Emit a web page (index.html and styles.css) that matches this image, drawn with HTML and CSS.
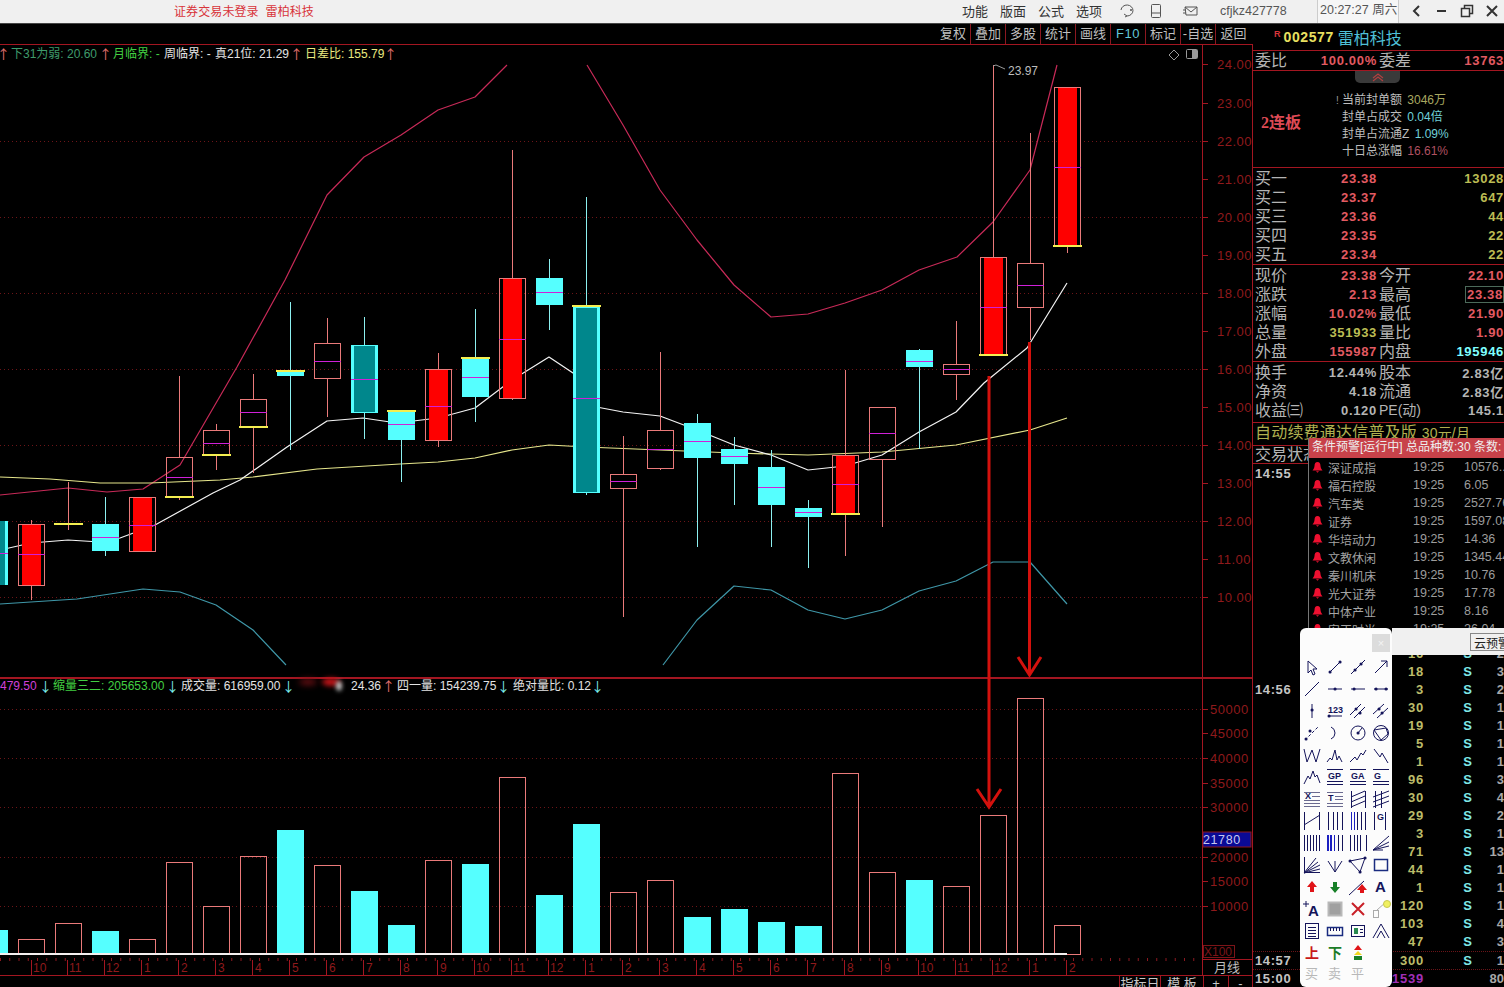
FILE: index.html
```html
<!DOCTYPE html>
<html lang="zh-CN">
<head>
<meta charset="utf-8">
<title>雷柏科技</title>
<link rel="stylesheet" href="styles.css">
</head>
<body>
<svg class="defs" width="0" height="0"><symbol id="bell" viewBox="0 0 11 12"><path d="M5.500 1C3.500 1 2.600 2.600 2.500 5 2.400 7 1.500 8 .5 9.500h10C9.500 8 8.600 7 8.500 5 8.400 2.600 7.500 1 5.500 1z"/><path d="M4 10.300h3l-1.500 1.500z"/></symbol></svg>
<header class="titlebar">
  <div class="title-name">证券交易未登录&nbsp;&nbsp;雷柏科技</div>
  <nav class="menu"><span>功能</span><span>版面</span><span>公式</span><span>选项</span></nav>
  <div class="tb-icons">
    <svg width="18" height="18" viewBox="0 0 18 18"><path class="tbi" d="M3 8a6 5.500 0 1 1 6 6l-2 1M6 12l3 2"/><circle cx="13" cy="8" r="1" class="tbd"/></svg>
    <svg width="14" height="18" viewBox="0 0 14 18"><rect class="tbi" x="2.500" y="2.500" width="9" height="13" rx="1"/><path class="tbi" d="M3 11h8"/></svg>
    <svg class="tb-mail" width="18" height="18" viewBox="0 0 18 18"><path class="tbi" d="M3 5h12v8H4zM3 5l6 5 6-5M1 8h3M1 11h3"/></svg>
  </div>
  <div class="user">cfjkz427778</div>
  <div class="clock">20:27:27 周六</div>
  <div class="win-ctl">
    <svg width="14" height="14" viewBox="0 0 14 14"><path class="wc" d="M9 2L4 7l5 5"/></svg>
    <svg width="14" height="14" viewBox="0 0 14 14"><path class="wc" d="M2 7h9"/></svg>
    <svg width="14" height="14" viewBox="0 0 14 14"><path class="wc thin" d="M1.500 4.500h8v8h-8zM4.500 4V1.500h8v8H10"/></svg>
    <svg width="14" height="14" viewBox="0 0 14 14"><path class="wc" d="M2 2l10 10M12 2L2 12"/></svg>
  </div>
</header>

<main class="main">
  <section class="chart-col">
    <div class="tabs">
      <span>复权</span><span>叠加</span><span>多股</span><span>统计</span><span>画线</span><span class="f10">F10</span><span>标记</span><span>-自选</span><span>返回</span>
    </div>
    <svg class="chart" width="1253" height="932" viewBox="0 44 1253 932">
      <path class="frame" d="M0 44.500H1253M1202.500 44V976M0 677.500H1253M0 678.500H1253M1202 959.500H1253M0 975.500H1253M1252.500 44V976"/>
      <path class="frame" d="M31.500 960V975M67.500 960V975M104.500 960V975M141.500 960V975M178.500 960V975M215.500 960V975M252.500 960V975M289.500 960V975M326.500 960V975M363.500 960V975M400.500 960V975M437.500 960V975M474.500 960V975M511.500 960V975M548.500 960V975M585.500 960V975M622.500 960V975M659.500 960V975M696.500 960V975M733.500 960V975M770.500 960V975M807.500 960V975M844.500 960V975M881.500 960V975M918.500 960V975M955.500 960V975M992.500 960V975M1029.500 960V975M1066.500 960V975"/>
      <path class="x-tick" d="M0 959.500H1202"/>
      <path class="grid" d="M0 141.500H1202M0 217.500H1202M0 293.500H1202M0 369.500H1202M0 445.500H1202M0 521.500H1202M0 597.500H1202M0 709.500H1202M0 758.500H1202M0 807.500H1202M0 857.500H1202M0 906.500H1202"/>
      <path class="frame" d="M1203 64.500h5M1203 103.500h5M1203 141.500h5M1203 179.500h5M1203 217.500h5M1203 255.500h5M1203 293.500h5M1203 331.500h5M1203 369.500h5M1203 407.500h5M1203 445.500h5M1203 483.500h5M1203 521.500h5M1203 559.500h5M1203 597.500h5M1203 709.500h5M1203 733.500h5M1203 758.500h5M1203 783.500h5M1203 807.500h5M1203 857.500h5M1203 881.500h5M1203 906.500h5"/>

      <polyline class="ln-pink" points="0,495 68,488 107,492 143,489 180,465 237,367 285,280 327,195 364,157 401,135 438,110 475,97 507,65"/>
      <polyline class="ln-pink" points="587,65 623,125 660,190 697,240 734,285 771,317 808,314 845,303 882,290 919,270 957,257 993,222 1030,170 1057,65"/>
      <polyline class="ln-yel" points="0,477 50,479 100,483 150,483 220,480 253,477 317,469 400,464 438,462 475,458 512,450 549,445 586,447 660,450 734,453 808,455 882,452 956,445 1030,430 1067,418"/>
      <polyline class="ln-wht" points="0,550 31,543 68,540 100,542 120,538 155,525 213,493 240,480 287,447 327,421 363,418 397,423 438,418 475,408 512,380 549,357 576,375 586,405 623,412 660,416 697,430 734,445 771,455 808,470 845,466 882,455 919,432 956,412 984,383 1027,348 1067,283"/>
      <polyline class="ln-teal" points="0,604 77,599 143,589 180,592 216,605 253,630 286,665"/>
      <polyline class="ln-teal" points="663,665 697,620 734,586 771,590 808,610 845,619 882,610 919,591 956,581 993,562 1030,562 1067,604"/>

      <path class="wk-up" d="M31.500 520V524M31.500 585V600M68.500 482V530M179.500 376V457M179.500 496V500M216.500 424V430M216.500 454V470M253.500 374V399M253.500 426V473M327.500 318V343M327.500 378V417M438.500 353V369M438.500 440V447M512.500 150V278M512.500 398V400M623.500 436V474M623.500 488V617M660.500 352V430M660.500 468V470M845.500 370V455M845.500 513V556M882.500 459V527M956.500 321V364M956.500 374V400M993.500 65V257M1030.500 133V263M1030.500 307V340M1067.500 245V253"/>
      <path class="wk-dn" d="M105.500 497V556M290.500 302V450M364.500 317V439M401.500 410V482M475.500 309V422M549.500 259V330M586.500 197V495M697.500 414V547M734.500 437V505M771.500 450V547M808.500 500V568M919.500 349V449"/>

      <g class="c-box">
        <rect x="18.500" y="524.500" width="26" height="61"/><rect x="129.500" y="497.500" width="26" height="54"/><rect x="166.500" y="457.500" width="26" height="39"/><rect x="203.500" y="430.500" width="26" height="24"/><rect x="240.500" y="399.500" width="26" height="27"/><rect x="314.500" y="343.500" width="26" height="35"/><rect x="425.500" y="369.500" width="26" height="71"/><rect x="499.500" y="278.500" width="26" height="120"/><rect x="610.500" y="474.500" width="26" height="14"/><rect x="647.500" y="430.500" width="26" height="38"/><rect x="832.500" y="455.500" width="26" height="58"/><rect x="869.500" y="407.500" width="26" height="52"/><rect x="943.500" y="364.500" width="26" height="10"/><rect x="980.500" y="257.500" width="26" height="97"/><rect x="1017.500" y="263.500" width="26" height="44"/><rect x="1054.500" y="87.500" width="26" height="158"/>
      </g>
      <g class="c-red">
        <rect x="22" y="525" width="19" height="60"/><rect x="133" y="498" width="19" height="53"/><rect x="429" y="370" width="19" height="70"/><rect x="503" y="279" width="19" height="119"/><rect x="836" y="456" width="19" height="57"/><rect x="984" y="258" width="19" height="96"/><rect x="1058" y="88" width="19" height="157"/>
      </g>
      <g class="c-cy">
        <rect x="0" y="521" width="8" height="64"/><rect x="92" y="524" width="27" height="27"/><rect x="277" y="371" width="27" height="5"/><rect x="351" y="345" width="27" height="68"/><rect x="388" y="411" width="27" height="29"/><rect x="462" y="358" width="27" height="39"/><rect x="536" y="278" width="27" height="27"/><rect x="573" y="307" width="27" height="186"/><rect x="684" y="423" width="27" height="35"/><rect x="721" y="449" width="27" height="15"/><rect x="758" y="467" width="27" height="38"/><rect x="795" y="508" width="27" height="9"/><rect x="906" y="350" width="27" height="17"/>
      </g>
      <g class="c-teal">
        <rect x="0" y="521" width="5" height="64"/><rect x="354" y="346" width="21" height="66"/><rect x="576" y="308" width="21" height="184"/>
      </g>
      <path class="mid" d="M0 553.500h8M18 554.500h27M92 537.500h27M129 525.500h27M166 477.500h27M203 443.500h27M240 412.500h27M314 361.500h27M351 379.500h27M388 424.500h27M425 406.500h27M462 377.500h27M499 339.500h27M536 292.500h27M573 398.500h27M610 481.500h27M647 449.500h27M684 441.500h27M721 456.500h27M758 487.500h27M795 512.500h27M832 484.500h27M869 433.500h27M906 361.500h27M943 369.500h27M980 307.500h27M1017 285.500h27M1054 167.500h27"/>
      <path class="c-yel" d="M54 523.500h29M165 496.500h29M202 454.500h29M239 426.500h29M276 370.500h29M387 410.500h29M461 357.500h29M572 306h29M831 513.500h29M979 354.500h29M1053 245.500h29"/>

      <path class="c-note" d="M993 66l3-1 9 4"/>
      <text class="t-gray" x="1008" y="75">23.97</text>
      <path class="c-note" d="M1174 50l5 5-5 5-5-5z"/>
      <rect class="c-note" x="1186.500" y="49.500" width="11" height="9" rx="1"/><rect class="c-fillg" x="1192" y="50" width="5" height="8"/>

      <g class="legend">
        <text class="t-red ar" x="-3" y="59">↑</text>
        <text class="t-dgreen" x="11" y="58">下31为弱: 20.60</text><text class="t-red ar" x="99" y="59">↑</text>
        <text class="t-green" x="113" y="58">月临界: -</text>
        <text class="t-white" x="164" y="58">周临界: -</text>
        <text class="t-white" x="215" y="58">真21位: 21.29</text><text class="t-red ar" x="290" y="59">↑</text>
        <text class="t-yel" x="305" y="58">日差比: 155.79</text><text class="t-red ar" x="384" y="59">↑</text>

        <text class="t-mag" x="0" y="690">479.50</text><text class="t-cy ar" x="39" y="691">↓</text>
        <text class="t-green" x="53" y="690">缩量三二: 205653.00</text><text class="t-cy ar" x="166" y="691">↓</text>
        <text class="t-white" x="181" y="690">成交量: 616959.00</text><text class="t-cy ar" x="282" y="691">↓</text>
        <ellipse class="blob-d" cx="308" cy="682" rx="9" ry="3"/><ellipse class="blob-r" cx="331" cy="682" rx="9" ry="4"/><ellipse class="blob-w" cx="339" cy="686" rx="3" ry="5"/>
        <text class="t-white" x="351" y="690">24.36</text><text class="t-red ar" x="382" y="691">↑</text>
        <text class="t-white" x="397" y="690">四一量: 154239.75</text><text class="t-cy ar" x="497" y="691">↓</text>
        <text class="t-white" x="513" y="690">绝对量比: 0.12</text><text class="t-cy ar" x="591" y="691">↓</text>
      </g>

      <g class="axis">
        <text x="1217" y="69">24.00</text><text x="1217" y="108">23.00</text><text x="1217" y="146">22.00</text><text x="1217" y="184">21.00</text><text x="1217" y="222">20.00</text><text x="1217" y="260">19.00</text><text x="1217" y="298">18.00</text><text x="1217" y="336">17.00</text><text x="1217" y="374">16.00</text><text x="1217" y="412">15.00</text><text x="1217" y="450">14.00</text><text x="1217" y="488">13.00</text><text x="1217" y="526">12.00</text><text x="1217" y="564">11.00</text><text x="1217" y="602">10.00</text>
        <text x="1210" y="714">50000</text><text x="1210" y="738">45000</text><text x="1210" y="763">40000</text><text x="1210" y="788">35000</text><text x="1210" y="812">30000</text><text x="1210" y="862">20000</text><text x="1210" y="886">15000</text><text x="1210" y="911">10000</text>
      </g>
      <rect class="hl" x="1203" y="832" width="48" height="15"/>
      <text class="t-hl" x="1203" y="844">21780</text>
      <rect class="xbox" x="1203.500" y="945.500" width="31" height="12"/>
      <text class="t-xbox" x="1204" y="956">X100</text>

      <g class="v-box">
        <rect x="18.500" y="939.500" width="26" height="15"/><rect x="55.500" y="923.500" width="26" height="31"/><rect x="129.500" y="939.500" width="26" height="15"/><rect x="166.500" y="862.500" width="26" height="92"/><rect x="203.500" y="906.500" width="26" height="48"/><rect x="240.500" y="856.500" width="26" height="98"/><rect x="314.500" y="865.500" width="26" height="89"/><rect x="425.500" y="860.500" width="26" height="94"/><rect x="499.500" y="777.500" width="26" height="177"/><rect x="610.500" y="892.500" width="26" height="62"/><rect x="647.500" y="880.500" width="26" height="74"/><rect x="832.500" y="773.500" width="26" height="181"/><rect x="869.500" y="872.500" width="26" height="82"/><rect x="943.500" y="886.500" width="26" height="68"/><rect x="980.500" y="815.500" width="26" height="139"/><rect x="1017.500" y="698.500" width="26" height="256"/><rect x="1054.500" y="925.500" width="26" height="29"/>
      </g>
      <g class="c-cy">
        <rect x="0" y="930" width="8" height="24"/><rect x="92" y="931" width="27" height="23"/><rect x="277" y="830" width="27" height="124"/><rect x="351" y="891" width="27" height="63"/><rect x="388" y="925" width="27" height="29"/><rect x="462" y="864" width="27" height="90"/><rect x="536" y="895" width="27" height="59"/><rect x="573" y="824" width="27" height="130"/><rect x="684" y="917" width="27" height="37"/><rect x="721" y="909" width="27" height="45"/><rect x="758" y="922" width="27" height="32"/><rect x="795" y="926" width="27" height="28"/><rect x="906" y="880" width="27" height="74"/>
      </g>
      <path class="baseline" d="M0 954H1067"/>

      <g class="x-lbl">
        <text x="33" y="972">10</text><text x="69" y="972">11</text><text x="106" y="972">12</text><text x="144" y="972">1</text><text x="181" y="972">2</text><text x="218" y="972">3</text><text x="255" y="972">4</text><text x="292" y="972">5</text><text x="329" y="972">6</text><text x="366" y="972">7</text><text x="403" y="972">8</text><text x="440" y="972">9</text><text x="476" y="972">10</text><text x="513" y="972">11</text><text x="550" y="972">12</text><text x="588" y="972">1</text><text x="625" y="972">2</text><text x="662" y="972">3</text><text x="699" y="972">4</text><text x="736" y="972">5</text><text x="773" y="972">6</text><text x="810" y="972">7</text><text x="847" y="972">8</text><text x="884" y="972">9</text><text x="920" y="972">10</text><text x="957" y="972">11</text><text x="994" y="972">12</text><text x="1032" y="972">1</text><text x="1069" y="972">2</text>
      </g>
      <text class="t-month" x="1214" y="972">月线</text>

      <path class="arrow" d="M989 376V806M977 789l12 18 12-18"/>
      <path class="arrow" d="M1029.500 342V675M1018 657l11.500 18 11.500-18"/>
    </svg>
    <div class="bottom-tabs"><span class="bt1">指标日</span><span class="bt2">模 板</span><span class="sq">+</span><span class="sq">-</span></div>
  </section>

  <aside class="side">
    <div class="s-head"><sup class="r">R</sup><b class="code">002577</b><span class="sname">雷柏科技</span></div>
    <div class="s-row wb"><span class="l">委比</span><span class="v red">100.00%</span><span class="l">委差</span><span class="v red">13763</span></div>
    <div class="s-seal">
      <div class="fold">
        <svg width="14" height="9" viewBox="0 0 14 9"><path class="foldp" d="M2 5l5-4 5 4M2 8l5-4 5 4"/></svg>
      </div>
      <div class="board">2连板</div>
      <ul class="seal-list">
        <li><i class="bang">!</i>当前封单额 <em class="olive">3046万</em></li>
        <li>封单占成交 <em class="sky">0.04倍</em></li>
        <li>封单占流通Z <em class="sky">1.09%</em></li>
        <li>十日总涨幅 <em class="rose">16.61%</em></li>
      </ul>
    </div>
    <div class="s-block">
      <div class="s-row"><span class="l">买一</span><span class="v red">23.38</span><span></span><span class="v yel">13028</span></div>
      <div class="s-row"><span class="l">买二</span><span class="v red">23.37</span><span></span><span class="v yel">647</span></div>
      <div class="s-row"><span class="l">买三</span><span class="v red">23.36</span><span></span><span class="v yel">44</span></div>
      <div class="s-row"><span class="l">买四</span><span class="v red">23.35</span><span></span><span class="v yel">22</span></div>
      <div class="s-row"><span class="l">买五</span><span class="v red">23.34</span><span></span><span class="v yel">22</span></div>
    </div>
    <div class="s-block">
      <div class="s-row"><span class="l">现价</span><span class="v red">23.38</span><span class="l">今开</span><span class="v red">22.10</span></div>
      <div class="s-row"><span class="l">涨跌</span><span class="v red">2.13</span><span class="l">最高</span><span class="v red"><span class="boxed">23.38</span></span></div>
      <div class="s-row"><span class="l">涨幅</span><span class="v red">10.02%</span><span class="l">最低</span><span class="v red">21.90</span></div>
      <div class="s-row"><span class="l">总量</span><span class="v yel">351933</span><span class="l">量比</span><span class="v red">1.90</span></div>
      <div class="s-row"><span class="l">外盘</span><span class="v red">155987</span><span class="l">内盘</span><span class="v cy">195946</span></div>
    </div>
    <div class="s-block three">
      <div class="s-row"><span class="l">换手</span><span class="v gr">12.44%</span><span class="l">股本</span><span class="v gr">2.83亿</span></div>
      <div class="s-row"><span class="l">净资</span><span class="v gr">4.18</span><span class="l">流通</span><span class="v gr">2.83亿</span></div>
      <div class="s-row"><span class="l">收益㈢</span><span class="v gr">0.120</span><span class="l pe">PE(动)</span><span class="v gr">145.1</span></div>
    </div>
    <div class="s-promo">自动续费通达信普及版 <b>30元/月</b></div>
    <div class="s-state">交易状态</div>
    <div class="ticks">
      <div class="tk"><span class="tm">14:55</span></div>
      <div class="tk"></div><div class="tk"></div><div class="tk"></div><div class="tk"></div><div class="tk"></div><div class="tk"></div><div class="tk"></div><div class="tk"></div><div class="tk"></div>
      <div class="tk"><span></span><span class="q">16</span><span class="s">S</span><span class="n">2</span></div>
      <div class="tk"><span></span><span class="q">18</span><span class="s">S</span><span class="n">3</span></div>
      <div class="tk"><span class="tm">14:56</span><span class="q">3</span><span class="s">S</span><span class="n">2</span></div>
      <div class="tk"><span></span><span class="q">30</span><span class="s">S</span><span class="n">1</span></div>
      <div class="tk"><span></span><span class="q">19</span><span class="s">S</span><span class="n">1</span></div>
      <div class="tk"><span></span><span class="q">5</span><span class="s">S</span><span class="n">1</span></div>
      <div class="tk"><span></span><span class="q">1</span><span class="s">S</span><span class="n">1</span></div>
      <div class="tk"><span></span><span class="q">96</span><span class="s">S</span><span class="n">3</span></div>
      <div class="tk"><span></span><span class="q">30</span><span class="s">S</span><span class="n">4</span></div>
      <div class="tk"><span></span><span class="q">29</span><span class="s">S</span><span class="n">2</span></div>
      <div class="tk"><span></span><span class="q">3</span><span class="s">S</span><span class="n">1</span></div>
      <div class="tk"><span></span><span class="q">71</span><span class="s">S</span><span class="n">13</span></div>
      <div class="tk"><span></span><span class="q">44</span><span class="s">S</span><span class="n">1</span></div>
      <div class="tk"><span></span><span class="q">1</span><span class="s">S</span><span class="n">1</span></div>
      <div class="tk"><span></span><span class="q">120</span><span class="s">S</span><span class="n">1</span></div>
      <div class="tk"><span></span><span class="q">103</span><span class="s">S</span><span class="n">4</span></div>
      <div class="tk"><span></span><span class="q">47</span><span class="s">S</span><span class="n">3</span></div>
      <div class="tk dot"><span class="tm">14:57</span><span class="q">300</span><span class="s">S</span><span class="n">1</span></div>
      <div class="tk dot"><span class="tm">15:00</span><span class="q pur">1539</span><span></span><span class="n">80</span></div>
    </div>
  </aside>
</main>

<section class="alerts">
  <div class="al-head">条件预警[运行中] 总品种数:30 条数:</div>
  <div class="al-row"><svg class="bell"><use href="#bell"/></svg><span class="al-n">深证成指</span><span class="al-t">19:25</span><span class="al-v">10576..</span></div>
  <div class="al-row"><svg class="bell"><use href="#bell"/></svg><span class="al-n">福石控股</span><span class="al-t">19:25</span><span class="al-v">6.05</span></div>
  <div class="al-row"><svg class="bell"><use href="#bell"/></svg><span class="al-n">汽车类</span><span class="al-t">19:25</span><span class="al-v">2527.76</span></div>
  <div class="al-row"><svg class="bell"><use href="#bell"/></svg><span class="al-n">证券</span><span class="al-t">19:25</span><span class="al-v">1597.08</span></div>
  <div class="al-row"><svg class="bell"><use href="#bell"/></svg><span class="al-n">华培动力</span><span class="al-t">19:25</span><span class="al-v">14.36</span></div>
  <div class="al-row"><svg class="bell"><use href="#bell"/></svg><span class="al-n">文教休闲</span><span class="al-t">19:25</span><span class="al-v">1345.44</span></div>
  <div class="al-row"><svg class="bell"><use href="#bell"/></svg><span class="al-n">秦川机床</span><span class="al-t">19:25</span><span class="al-v">10.76</span></div>
  <div class="al-row"><svg class="bell"><use href="#bell"/></svg><span class="al-n">光大证券</span><span class="al-t">19:25</span><span class="al-v">17.78</span></div>
  <div class="al-row"><svg class="bell"><use href="#bell"/></svg><span class="al-n">中体产业</span><span class="al-t">19:25</span><span class="al-v">8.16</span></div>
  <div class="al-row"><svg class="bell"><use href="#bell"/></svg><span class="al-n">安正时尚</span><span class="al-t">19:25</span><span class="al-v">26.04</span></div>
</section>

<div class="cloudbar"><button class="cloud">云预警</button></div>

<section class="drawbar">
  <div class="db-head"><span class="db-close">×</span></div>
  <div class="db-grid">
    <svg viewBox="0 0 22 22"><path d="M7 5v12l3-3 2 5 2-1-2-5h4z"/></svg>
    <svg viewBox="0 0 22 22"><path d="M6 16L16 6"/><path class="d" d="M6 16h.1M16 6h.1"/></svg>
    <svg viewBox="0 0 22 22"><path d="M4 18L18 4"/><path class="d" d="M8 14h.1M14 8h.1"/></svg>
    <svg viewBox="0 0 22 22"><path d="M5 17L17 5M11 5h6v6"/></svg>

    <svg viewBox="0 0 22 22"><path d="M4 18L18 4"/></svg>
    <svg viewBox="0 0 22 22"><path d="M4 11h14"/><path class="d" d="M11 11h.1"/></svg>
    <svg viewBox="0 0 22 22"><path d="M4 11h14"/><path class="d" d="M7 11h.1"/></svg>
    <svg viewBox="0 0 22 22"><path d="M4 11h14"/><path class="d" d="M6 11h.1M16 11h.1"/></svg>

    <svg viewBox="0 0 22 22"><path d="M11 4v14"/><path class="d" d="M11 10h.1"/></svg>
    <svg viewBox="0 0 22 22"><text class="tg" x="4" y="13">123</text><path d="M4 16h14"/><path class="d" d="M5 16h.1"/></svg>
    <svg viewBox="0 0 22 22"><path d="M3 15L14 4M7 18L18 7"/><path class="d" d="M9 9h.1M13 13h.1"/></svg>
    <svg viewBox="0 0 22 22"><path d="M3 14L14 4M7 18L18 8"/><path class="d" d="M9 9h.1M12 13h.1"/></svg>

    <svg viewBox="0 0 22 22"><path class="dash" d="M4 18L18 4"/><path class="d" d="M5 17h.1M9 9h.1"/></svg>
    <svg viewBox="0 0 22 22"><path d="M7 5a6.500 6.500 0 0 1 0 12"/></svg>
    <svg viewBox="0 0 22 22"><circle cx="11" cy="11" r="7"/><path d="M11 11l4-5"/><path class="d" d="M11 11h.1"/></svg>
    <svg viewBox="0 0 22 22"><circle cx="11" cy="11" r="7.500"/><path d="M4 8l12-2 2 6-7 6z"/></svg>

    <svg viewBox="0 0 22 22"><path d="M3 5l3 13 5-12 4 12 4-13"/></svg>
    <svg viewBox="0 0 22 22"><path d="M3 18l3-4 2 2 3-10 2 10 2-4 3 6"/></svg>
    <svg viewBox="0 0 22 22"><path d="M3 18l5-5 2 3 4-7 2 2 3-5"/></svg>
    <svg viewBox="0 0 22 22"><path d="M4 5l6 8 2-4 6 10"/></svg>

    <svg viewBox="0 0 22 22"><path d="M3 18l4-8 2 3 3-8 2 6 2-2 3 8"/></svg>
    <svg viewBox="0 0 22 22"><path d="M3 3.500h16M3 15.500h16M3 18.500h16"/><text class="tg" x="4" y="13">GP</text></svg>
    <svg viewBox="0 0 22 22"><path d="M3 3.500h16M3 15.500h16M3 18.500h16"/><text class="tg" x="4" y="13">GA</text></svg>
    <svg viewBox="0 0 22 22"><path d="M3 3.500h16M3 15.500h16M3 18.500h16"/><text class="tg" x="4" y="13">G</text></svg>

    <svg viewBox="0 0 22 22"><path d="M3 4.500h16M11 8.500h8M3 12.500h16M3 15.500h16M3 18.500h16" class="lt"/><text class="tg" x="4" y="11">X</text></svg>
    <svg viewBox="0 0 22 22"><path d="M3 4.500h16M11 8.500h8M11 11.500h8M3 15.500h16M3 18.500h16" class="lt"/><text class="tg" x="4" y="13">T</text></svg>
    <svg viewBox="0 0 22 22"><path d="M4.500 3v17M18.500 3v17M4 9l14-6M4 14l14-6M4 19l14-6"/></svg>
    <svg viewBox="0 0 22 22"><path d="M5.500 3v17M11.500 3v17M3 9l16-6M3 14l16-6M3 19l16-6"/></svg>

    <svg viewBox="0 0 22 22"><path d="M3.500 2v18M18.500 2v18M3 15L19 5"/></svg>
    <svg viewBox="0 0 22 22"><path d="M4.500 2v18M9.500 2v18M13.500 2v18M18.500 2v18"/></svg>
    <svg viewBox="0 0 22 22"><path class="blue" d="M4.500 2v18M7.500 2v18"/><path d="M10.500 2v18M14.500 2v18M18.500 2v18"/></svg>
    <svg viewBox="0 0 22 22"><path d="M4.500 2v18M15.500 2v18"/><text class="tg" x="7" y="10">G</text></svg>

    <svg viewBox="0 0 22 22"><path d="M3.500 3v16M6.500 3v16M9.500 3v16M12.500 3v16M15.500 3v16M18.500 3v16"/></svg>
    <svg viewBox="0 0 22 22"><path class="blue2" d="M4 3v16M7 3v16"/><path class="blue" d="M10.500 3v16"/><path d="M14.500 3v16M18.500 3v16"/></svg>
    <svg viewBox="0 0 22 22"><path d="M3.500 3v16M7.500 3v16M10.500 3v16M13.500 3v16M19.500 3v16"/></svg>
    <svg viewBox="0 0 22 22"><path d="M3 18L19 4M3 18l16-8M3 18l16-4M3 18h10"/></svg>

    <svg viewBox="0 0 22 22"><path d="M3.500 3v15.500H19M3 19L15 4M3 19l14-11M3 19l16-8M3 19l16-4"/></svg>
    <svg viewBox="0 0 22 22"><path d="M11 18V7M4 7l7 11 7-11"/></svg>
    <svg viewBox="0 0 22 22"><path d="M3 7l15-3-5 14z"/><path class="d" d="M3 7h.1M18 4h.1M13 18h.1"/></svg>
    <svg viewBox="0 0 22 22"><rect x="4.500" y="5.500" width="13" height="11" class="bl"/></svg>

    <svg viewBox="0 0 22 22"><path class="fill-r" d="M11 5l5 6h-3v5H9v-5H6z"/></svg>
    <svg viewBox="0 0 22 22"><path class="fill-g" d="M11 17l5-6h-3V6H9v5H6z"/></svg>
    <svg viewBox="0 0 22 22"><path d="M2 19L17 5"/><path class="fill-r" d="M15 8l5 6h-3v3h-4v-3h-3z"/></svg>
    <svg viewBox="0 0 22 22"><text class="tb" x="5" y="16">A</text></svg>

    <svg viewBox="0 0 22 22"><path d="M2 6h6M5 3v6"/><text class="tb" x="7" y="18">A</text></svg>
    <svg viewBox="0 0 22 22"><rect class="gsq" x="4.500" y="4.500" width="13" height="13"/></svg>
    <svg viewBox="0 0 22 22"><path class="redx" d="M5 5l12 12M17 5L5 17"/></svg>
    <svg viewBox="0 0 22 22"><rect class="gln" x="3.500" y="12.500" width="5" height="7"/><path class="gln" d="M7 12l9-8"/><circle class="yc" cx="17" cy="6" r="3.500"/></svg>

    <svg viewBox="0 0 22 22"><rect x="4.500" y="3.500" width="13" height="15"/><path d="M7 7.500h8M7 10.500h8M7 13.500h8M7 16.500h8"/></svg>
    <svg viewBox="0 0 22 22"><rect x="3.500" y="7.500" width="15" height="8" class="bl"/><path d="M6.500 8v3M9.500 8v3M12.500 8v3M15.500 8v3"/></svg>
    <svg viewBox="0 0 22 22"><rect x="4.500" y="5.500" width="13" height="11"/><rect class="gfill" x="7" y="8" width="4" height="6"/><path d="M13 9.500h3M13 12.500h3"/></svg>
    <svg viewBox="0 0 22 22"><path d="M3 18l8-14 8 14M7 18l4-7 4 7"/></svg>

    <svg viewBox="0 0 22 22"><text class="tc red" x="4" y="16">上</text></svg>
    <svg viewBox="0 0 22 22"><text class="tc green" x="4" y="16">下</text></svg>
    <svg viewBox="0 0 22 22"><path class="fill-r" d="M11 3l4 5H7z"/><path class="fill-y" d="M11 9l4 4H7z"/><path class="fill-g" d="M7 14h8v4H7z"/></svg>
    <span></span>

    <span class="trade">买</span><span class="trade">卖</span><span class="trade">平</span><span></span>
  </div>
</section>
</body>
</html>
```
FILE: styles.css
```css
* { box-sizing: border-box; }
html, body { margin: 0; padding: 0; }
body {
  width: 1504px; height: 987px; overflow: hidden; background: #000; position: relative;
  font-family: "Liberation Sans", "Noto Sans CJK SC", sans-serif; color: #bbb;
}
.defs { position: absolute; }

/* title bar */
.titlebar {
  height: 24px; display: flex; align-items: center; background: #f0f0f0; border-bottom: 1px solid #444;
  color: #333; font-size: 13px;
}
.title-name { margin-left: 174px; width: 788px; color: #d8343a; font-size: 12px; letter-spacing: .1px; padding-bottom: 3px; }
.menu { display: flex; gap: 11px; width: 153px; padding-bottom: 2px; }
.menu span { width: 27px; }
.tb-icons { display: flex; gap: 13px; width: 105px; padding-left: 3px; align-items: center; padding-bottom: 2px; }
.tb-mail { margin-left: 6px; }
.tbi { fill: none; stroke: #555; stroke-width: 1; }
.tbd { fill: #555; }
.user { width: 97px; font-size: 12.500px; color: #555; padding-bottom: 2px; }
.clock {
  width: 82px; height: 23px; line-height: 21px; font-size: 12.500px; color: #555;
  border-left: 1px solid #ccc; border-right: 1px solid #ccc; padding-left: 2px; white-space: nowrap; background: #f6f6f6;
}
.win-ctl { display: flex; margin-left: 11px; gap: 11px; align-items: center; padding-bottom: 2px; }
.wc { fill: none; stroke: #333; stroke-width: 2; }
.wc.thin { stroke-width: 1.500; }

/* main */
.main { display: flex; height: 963px; }
.chart-col { width: 1253px; flex: none; display: flex; flex-direction: column; }
.tabs { height: 20px; display: flex; justify-content: flex-end; padding-right: 2px; font-size: 13px; }
.tabs span {
  width: 35px; text-align: center; line-height: 19px; color: #bfbfbf; border-right: 1px solid #8c1820; white-space: nowrap;
}
.tabs span:last-child { border-right: 0; }
.tabs .f10 { color: #62c8d8; letter-spacing: .5px; }
.chart { display: block; flex: none; }
.bottom-tabs { height: 11px; display: flex; justify-content: flex-end; font-size: 13px; line-height: 16px; overflow: hidden; border-right: 1px solid #a31621; }
.bottom-tabs span { border-left: 1px solid #a31621; color: #c8c8c8; white-space: nowrap; text-align: center; }
.bottom-tabs .bt1 { width: 41px; }
.bottom-tabs .bt2 { width: 43px; }
.bottom-tabs .sq { width: 25px; }
.bottom-tabs .sq:last-child { width: 24px; }

/* chart svg */
.frame { fill: none; stroke: #a31621; stroke-width: 1; }
.grid { fill: none; stroke: #6c1518; stroke-width: 1; stroke-dasharray: 1 3; }
.x-tick { fill: none; stroke: #8c1820; stroke-width: 3; stroke-dasharray: 1 8.250; }
.baseline { fill: none; stroke: #f4f0f0; stroke-width: 2; }
polyline { fill: none; stroke-width: 1.200; stroke-linejoin: round; }
.ln-pink { stroke: #c82a58; }
.ln-yel { stroke: #e6e68c; }
.ln-wht { stroke: #f4f4f4; }
.ln-teal { stroke: #3f97a8; }
.wk-up { fill: none; stroke: #ea7a7a; stroke-width: 1; }
.wk-dn { fill: none; stroke: #8cf0f0; stroke-width: 1; }
.c-box rect { fill: none; stroke: #ea7a7a; stroke-width: 1; shape-rendering: crispEdges; }
.c-red rect { fill: #fe0000; shape-rendering: crispEdges; }
.c-cy rect { fill: #55ffff; shape-rendering: crispEdges; }
.c-teal rect { fill: #00878c; shape-rendering: crispEdges; }
.mid { fill: none; stroke: #d020d8; stroke-width: 1; shape-rendering: crispEdges; }
.c-yel { fill: none; stroke: #f4ee50; stroke-width: 2; shape-rendering: crispEdges; }
.v-box rect { fill: none; stroke: #ea7a7a; stroke-width: 1; shape-rendering: crispEdges; }
.arrow { fill: none; stroke: #d4110d; stroke-width: 3; stroke-linejoin: miter; }
.c-note { fill: none; stroke: #9a9a9a; stroke-width: 1; }
.c-fillg { fill: #9a9a9a; }
.legend text { font-size: 12px; }
.legend text.ar { font-family: "Noto Sans CJK SC", sans-serif; font-size: 13px; }
.t-gray { fill: #bdbdbd; font-size: 12px; }
.t-red { fill: #e87070; }
.t-dgreen { fill: #3f9c6c; }
.t-green { fill: #42cf42; }
.t-white { fill: #e4e4e4; }
.t-yel { fill: #eaea80; }
.t-mag { fill: #d040d8; }
.t-cy { fill: #7ff0f0; }
.blob-d { fill: #701014; filter: blur(3px); }
.blob-r { fill: #c01418; filter: blur(2.500px); }
.blob-w { fill: #ccc; filter: blur(2px); }
.axis text { fill: #8f1a1c; font-size: 13px; letter-spacing: .5px; }
.hl { fill: #0a0a96; stroke: #8c1820; }
.t-hl { fill: #c8c8f0; font-size: 12.500px; letter-spacing: .6px; }
.xbox { fill: none; stroke: #7c1418; }
.t-xbox { fill: #7c1418; font-size: 12px; }
.x-lbl text { fill: #8f1a1c; font-size: 12px; }
.t-month { fill: #bdbdbd; font-size: 13px; }

/* side panel */
.side { width: 251px; flex: none; display: flex; flex-direction: column; background: #000; }
.s-head { height: 26px; display: flex; align-items: center; padding-left: 21px; white-space: nowrap; }
.r { color: #d8343a; font-size: 9px; font-weight: bold; margin: -6px 3px 0 0; }
.code { color: #e8e060; font-size: 14px; letter-spacing: .6px; margin-right: 4px; }
.sname { color: #4fc0d8; font-size: 16px; }
.s-row {
  display: grid; grid-template-columns: 50px 74px 50px 1fr; height: 19px; align-items: center; white-space: nowrap;
}
.wb { height: 20px; border-top: 1px solid #a31621; }
.l { font-size: 16px; color: #b4b4b4; padding-left: 2px; line-height: 19px; }
.l.pe { font-size: 14px; }
.v { font-size: 13px; font-weight: bold; text-align: right; letter-spacing: .7px; }
.red { color: #e25a62; }
.yel { color: #bcbc54; }
.cy { color: #7fffff; }
.gr { color: #b4b4b4; }
.boxed { border: 1px solid #4c6a5a; padding: 0 0 0 1px; display: inline-block; line-height: 15px; }
.s-seal {
  height: 97px; border-top: 1px solid #a31621; position: relative; display: flex; align-items: flex-start; padding-top: 21px;
}
.fold {
  position: absolute; left: 102px; top: 0; width: 45px; height: 12px; background: #3a3a3a;
  border-radius: 0 0 5px 5px; display: flex; justify-content: center; align-items: center;
}
.foldp { fill: none; stroke: #b04040; stroke-width: 1.200; }
.board { width: 89px; padding: 20px 0 0 8px; font-family: "Liberation Serif", "Noto Sans CJK SC", serif; font-weight: bold; font-size: 16px; line-height: 22px; color: #dd4a55; }
.seal-list { list-style: none; margin: 0; padding: 0; font-size: 12px; color: #bdbdbd; position: relative; white-space: nowrap; }
.seal-list li { height: 17px; line-height: 17px; }
.seal-list em { font-style: normal; margin-left: 2px; }
.bang { position: absolute; left: -6px; color: #999; font-style: normal; font-size: 10px; }
.olive { color: #a8a860; }
.sky { color: #70d0d8; }
.rose { color: #b05060; }
.s-block { border-top: 1px solid #a31621; padding-top: 1px; height: 97px; }
.s-block.three { height: 61px; }
.s-promo {
  height: 23px; border-top: 1px solid #a31621; font-size: 16px; color: #b0b050; padding-left: 2px; line-height: 20px; white-space: nowrap; letter-spacing: .2px;
}
.s-promo b { font-size: 14px; font-weight: normal; }
.s-state { height: 19px; border-top: 1px solid #a31621; border-bottom: 1px solid #a31621; font-size: 16px; color: #b4b4b4; padding-left: 2px; line-height: 17px; }
.ticks { flex: 1; display: flex; flex-direction: column; overflow: hidden; padding-top: 1px; }
.tk {
  height: 18px; flex: none; display: grid; grid-template-columns: 47px 124px 54px 26px; align-items: center; font-size: 13px; font-weight: bold; line-height: 18px;
}
.tk.dot { border-top: 1px dotted #6a1418; }
.tm { color: #c4c4c4; padding-left: 2px; letter-spacing: .6px; }
.q { color: #bcbc6a; text-align: right; letter-spacing: .8px; }
.q.pur { color: #a030b8; }
.s { color: #7fe8e8; text-align: right; padding-right: 6px; }
.n { color: #a8a8a8; text-align: right; }

/* floating alert window */
.alerts {
  position: absolute; left: 1308px; top: 438px; width: 196px; height: 190px; background: #000;
  border-left: 1px solid #777; overflow: hidden; font-size: 12px; color: #9c9c9c;
}
.al-head { height: 20px; line-height: 19px; background: #c8424a; color: #eee; padding-left: 4px; white-space: nowrap; margin-left: -1px; }
.al-row { height: 18px; display: flex; align-items: center; white-space: nowrap; }
.bell { width: 11px; height: 12px; margin-left: 3px; fill: #ee1030; flex: none; }
.al-n { width: 85px; margin-left: 5px; flex: none; color: #a4a4a4; }
.al-t { width: 51px; flex: none; font-size: 12.500px; }
.al-v { flex: none; font-size: 12.500px; }

.cloudbar {
  position: absolute; left: 1392px; top: 628px; width: 112px; height: 27px; background: #f0f0f0; padding: 5px 0 0 78px; overflow: hidden;
}
.cloud {
  width: 50px; height: 18px; padding: 0 0 0 3px; font: 12px "Liberation Sans", "Noto Sans CJK SC", sans-serif; color: #222; text-align: left;
  background: #f0f0f0; border: 1px solid #888; white-space: nowrap;
}

/* drawing toolbar */
.drawbar {
  position: absolute; left: 1300px; top: 628px; width: 92px; height: 359px; background: #fcfcfc;
  border-radius: 6px;
}
.db-head { height: 28px; position: relative; }
.db-close {
  position: absolute; left: 72px; top: 6px; width: 18px; height: 18px; background: #dcdcdc; color: #f4f4f4; font-size: 11px; text-align: center; line-height: 18px;
}
.db-grid { display: grid; grid-template-columns: repeat(4, 23px); grid-auto-rows: 22px; padding-left: 1px; }
.db-grid svg { width: 22px; height: 22px; fill: none; stroke: #14145a; stroke-width: 1; }
.db-grid .d { stroke-width: 3; stroke-linecap: round; }
.db-grid .dash { stroke-dasharray: 3 2; }
.db-grid .lt { stroke: #6a6a90; }
.db-grid text { stroke: none; fill: #14145a; }
.tg { font-size: 9px; font-weight: bold; }
.tb { font-size: 15px; font-weight: bold; }
.db-grid text.tc { font-size: 14px; font-weight: bold; }
.db-grid text.red { fill: #c81818; }
.db-grid text.green { fill: #1c7c28; }
.db-grid .blue { stroke: #1c20c0; }
.db-grid .blue2 { stroke: #1c20c0; stroke-width: 2; }
.db-grid .bl { stroke: #1a2c80; stroke-width: 1.500; }
.db-grid .fill-r { fill: #e01418; stroke: none; }
.db-grid .fill-g { fill: #188028; stroke: none; }
.db-grid .fill-y { fill: #f0d820; stroke: none; }
.db-grid .gsq { fill: #a0a0a0; stroke: #b8b8b8; stroke-width: 2; }
.db-grid .redx { stroke: #c82028; stroke-width: 2; }
.db-grid .gln { stroke: #aaa; fill: none; }
.db-grid .yc { fill: #f0f060; stroke: #c8c850; }
.db-grid .gfill { fill: #2a8a50; stroke: none; }
.trade { font-size: 13px; color: #b8b8b8; text-align: center; line-height: 20px; margin-left: -2px; }
```
